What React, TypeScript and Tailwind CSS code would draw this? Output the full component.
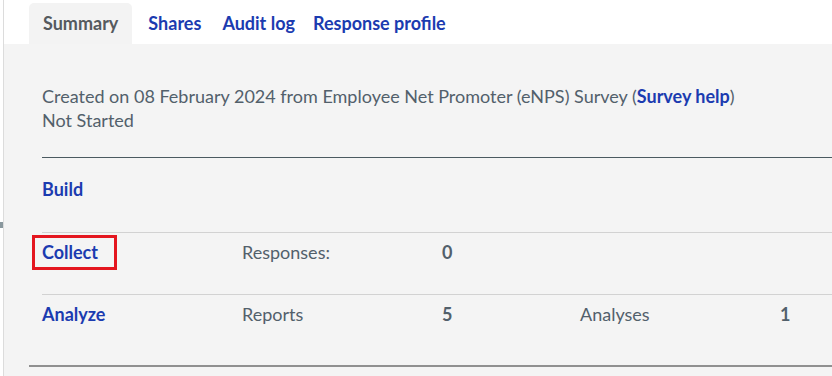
import React from "react";

const font = { fontFamily: "Lato, 'Noto Sans', sans-serif" };

export default function App() {
  return (
    <div className="flex w-[832px] h-[376px] overflow-hidden bg-white text-[18px] leading-[24px]" style={font}>
      <div className="w-[3px] shrink-0 bg-white pt-[222px]">
        <div className="w-[3px] h-[6px] bg-[#8a989e]" />
      </div>
      <div className="w-px shrink-0 bg-[#dcdcdc]" />
      <div className="flex-1 flex flex-col min-w-0">
        <div className="h-[44px] bg-white flex items-end pl-[25px] gap-[4px]">
          <div className="h-[41px] px-[14px] pt-[8px] bg-[#f3f3f3] rounded-t-[5px] font-bold text-[#555a5e]">Summary</div>
          <div className="h-[41px] pl-[12px] pr-[13px] pt-[8px] font-bold text-[#1b3bb0]">Shares</div>
          <div className="h-[41px] px-[4px] pt-[8px] font-bold text-[#1b3bb0]">Audit log</div>
          <div className="h-[41px] px-[10px] pt-[8px] font-bold text-[#1b3bb0]">Response profile</div>
        </div>
        <div className="flex-1 bg-[#f4f4f4] pl-[25px] pt-[40px]">
          <div className="pl-[13px]">
            <div className="text-[#52606b]">
              <div>
                Created on 08 February 2024 from Employee Net Promoter (eNPS) Survey (
                <span className="font-bold text-[#1b3bb0]">Survey help</span>)
              </div>
              <div>Not Started</div>
            </div>
            <div className="mt-[25px] h-px bg-[#4b5a60]" />
            <div className="pt-[19px] pb-[31px] border-b border-[#d2d2d2]">
              <span className="font-bold text-[#1b3bb0]">Build</span>
            </div>
            <div className="flex pt-[7px] pb-[30px] border-b border-[#d2d2d2] text-[#52606b]">
              <div className="w-[200px] relative">
                <span className="font-bold text-[#1b3bb0]">Collect</span>
                <div className="absolute left-[-10px] top-[-5px] w-[85px] h-[35px] border-[3px] border-[#e4161f]" />
              </div>
              <div className="w-[200px]">Responses:</div>
              <div className="w-[138px] font-bold">0</div>
            </div>
            <div className="flex pt-[7px] pb-[39px] text-[#52606b]">
              <div className="w-[200px]">
                <span className="font-bold text-[#1b3bb0]">Analyze</span>
              </div>
              <div className="w-[200px]">Reports</div>
              <div className="w-[138px] font-bold">5</div>
              <div className="w-[200px]">Analyses</div>
              <div className="font-bold">1</div>
            </div>
          </div>
          <div className="h-[2px] bg-[#909090]" />
        </div>
      </div>
    </div>
  );
}
